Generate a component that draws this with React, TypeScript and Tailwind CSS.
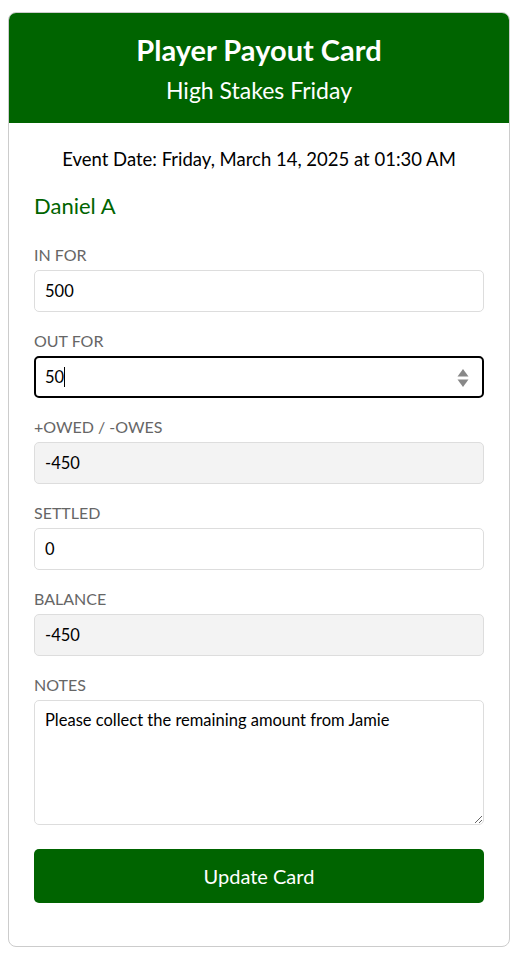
import React from 'react';

const Field: React.FC<{ label: string; value: string; readOnly?: boolean }> = ({ label, value, readOnly }) => (
  <div className="mt-[20px]">
    <label className="block text-[16px] leading-[18px] uppercase text-[#666]">{label}</label>
    <input
      readOnly
      value={value}
      className={`mt-[6px] block w-full h-[42px] px-[10px] text-[16.5px] text-black border border-[#ddd] rounded-[5px] outline-none ${
        readOnly ? 'bg-[#f3f3f3]' : 'bg-white'
      }`}
    />
  </div>
);

export default function App() {
  return (
    <div className="min-h-screen bg-white px-2 pt-3 pb-2" style={{ fontFamily: 'Lato, "Noto Sans", sans-serif' }}>
      <div className="w-[502px] border border-[#ccc] rounded-lg overflow-hidden">
        {/* Header */}
        <div className="h-[110px] bg-[#006400] text-white flex flex-col items-center pt-[20px]">
          <h1 className="text-[29px] leading-[34px] font-bold">Player Payout Card</h1>
          <h2 className="mt-[9px] text-[23px] leading-[28px]">High Stakes Friday</h2>
        </div>

        {/* Body */}
        <div className="px-[25px] pt-[25px] pb-[43px]">
          <p className="text-center text-[18.5px] leading-[22px] text-black">
            Event Date: Friday, March 14, 2025 at 01:30 AM
          </p>
          <h3 className="mt-[22px] text-[22px] leading-[28px] text-[#006400]">Daniel A</h3>

          <div className="mt-[6px] flex flex-col">
            <Field label="In For" value="500" />

            <div className="mt-[20px]">
              <label className="block text-[16px] leading-[18px] uppercase text-[#666]">Out For</label>
              <div className="relative mt-[6px] h-[42px] border-2 border-black rounded-[5px] flex items-center pl-[9px] text-[16.5px] text-black">
                <span>50</span>
                <span className="w-px h-[20px] bg-black"></span>
                <svg className="absolute right-[13px] top-[10px]" width="12" height="20" viewBox="0 0 12 20">
                  <path d="M6 1 L11.5 8.5 L0.5 8.5 Z" fill="#888" />
                  <path d="M6 19 L11.5 11.5 L0.5 11.5 Z" fill="#888" />
                </svg>
              </div>
            </div>

            <Field label="+Owed / -Owes" value="-450" readOnly />
            <Field label="Settled" value="0" />
            <Field label="Balance" value="-450" readOnly />

            <div className="mt-[20px]">
              <label className="block text-[16px] leading-[18px] uppercase text-[#666]">Notes</label>
              <textarea
                readOnly
                value="Please collect the remaining amount from Jamie"
                className="mt-[6px] block w-full h-[125px] px-[10px] py-[8px] text-[16.5px] leading-[22px] text-black border border-[#ddd] rounded-[5px] outline-none resize-y"
              />
            </div>
          </div>

          <button className="mt-[24px] w-full h-[54px] bg-[#006400] text-white text-[20px] rounded-[5px]">
            Update Card
          </button>
        </div>
      </div>
    </div>
  );
}
